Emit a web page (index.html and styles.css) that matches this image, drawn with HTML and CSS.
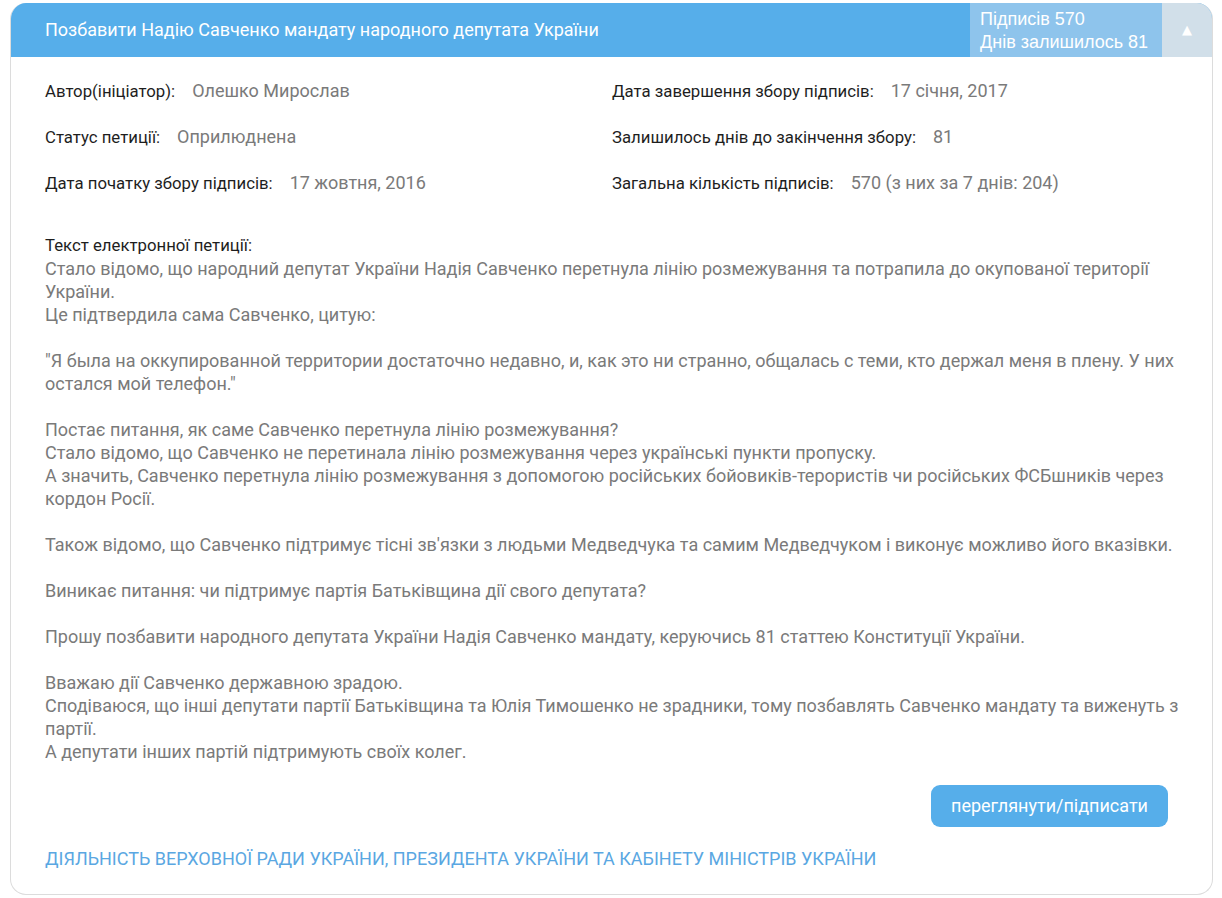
FILE: index.html
```html
<!DOCTYPE html>
<html lang="uk">
<head>
    <meta charset="UTF-8">
    <title>Петиція</title>
    <link rel="stylesheet" href="styles.css">
</head>
<body>
    <div class="petition">
        <div class="petition-head">
            <div class="petition-title">Позбавити Надію Савченко мандату народного депутата України</div>
            <div class="petition-stats">
                <p>Підписів 570</p>
                <p>Днів залишилось 81</p>
            </div>
            <div class="petition-toggle">&#9650;</div>
        </div>

        <div class="petition-body">
            <div class="meta">
                <div class="meta-row"><span class="meta-label">Автор(ініціатор):</span><span class="meta-value">Олешко Мирослав</span></div>
                <div class="meta-row"><span class="meta-label">Дата завершення збору підписів:</span><span class="meta-value">17 січня, 2017</span></div>
                <div class="meta-row"><span class="meta-label">Статус петиції:</span><span class="meta-value">Оприлюднена</span></div>
                <div class="meta-row"><span class="meta-label">Залишилось днів до закінчення збору:</span><span class="meta-value">81</span></div>
                <div class="meta-row"><span class="meta-label">Дата початку збору підписів:</span><span class="meta-value">17 жовтня, 2016</span></div>
                <div class="meta-row"><span class="meta-label">Загальна кількість підписів:</span><span class="meta-value">570 (з них за 7 днів: 204)</span></div>
            </div>

            <div class="petition-text">
                <h3>Текст електронної петиції:</h3>
                <p>Стало відомо, що народний депутат України Надія Савченко перетнула лінію розмежування та потрапила до окупованої території України.<br>
                Це підтвердила сама Савченко, цитую:</p>
                <p>"Я была на оккупированной территории достаточно недавно, и, как это ни странно, общалась с теми, кто держал меня в плену. У них остался мой телефон."</p>
                <p>Постає питання, як саме Савченко перетнула лінію розмежування?<br>
                Стало відомо, що Савченко не перетинала лінію розмежування через українські пункти пропуску.<br>
                А значить, Савченко перетнула лінію розмежування з допомогою російських бойовиків-терористів чи російських ФСБшників через кордон Росії.</p>
                <p>Також відомо, що Савченко підтримує тісні зв'язки з людьми Медведчука та самим Медведчуком і виконує можливо його вказівки.</p>
                <p>Виникає питання: чи підтримує партія Батьківщина дії свого депутата?</p>
                <p>Прошу позбавити народного депутата України Надія Савченко мандату, керуючись 81 статтею Конституції України.</p>
                <p>Вважаю дії Савченко державною зрадою.<br>
                Сподіваюся, що інші депутати партії Батьківщина та Юлія Тимошенко не зрадники, тому позбавлять Савченко мандату та виженуть з партії.<br>
                А депутати інших партій підтримують своїх колег.</p>
            </div>

            <div class="actions">
                <a href="#" class="sign-btn">переглянути/підписати</a>
            </div>

            <a href="#" class="category">Діяльність Верховної Ради України, Президента України та Кабінету Міністрів України</a>
        </div>
    </div>
</body>
</html>
```

FILE: styles.css
```css
* {
    margin: 0;
    padding: 0;
    box-sizing: border-box;
}

body {
    background: #fff;
    font-family: Roboto, 'Noto Sans', sans-serif;
}

.petition {
    margin: 3px 0 0 10px;
    width: 1203px;
    height: 892px;
    border: 1px solid #dcdcdc;
    border-top: none;
    border-radius: 16px;
    overflow: hidden;
}

.petition-head {
    display: flex;
    height: 54px;
    background: #56aeea;
}

.petition-title {
    flex: 1;
    padding-left: 34px;
    line-height: 54px;
    color: #fff;
    font-size: 18px;
}

.petition-stats {
    width: 192px;
    padding: 5px 0 0 10px;
    background: #8ec4ec;
    color: #fff;
    font-family: 'Liberation Sans', Arial, sans-serif;
    font-size: 18px;
    line-height: 23px;
}

.petition-toggle {
    width: 50px;
    background: #d1dfe9;
    color: #fff;
    text-align: center;
    line-height: 54px;
    font-size: 13px;
    font-family: 'DejaVu Sans', sans-serif;
}

.petition-body {
    padding: 22px 33px 0 34px;
}

.meta {
    display: grid;
    grid-template-columns: 567px 1fr;
    row-gap: 23px;
}

.meta-row {
    display: flex;
    align-items: baseline;
    height: 23px;
    line-height: 23px;
}

.meta-label {
    color: #1e1e1e;
    font-size: 16.75px;
    margin-right: 17px;
}

.meta-value {
    color: #7a7a7a;
    font-size: 18px;
}

.petition-text {
    margin-top: 40px;
    color: #7a7a7a;
    font-size: 18px;
    line-height: 23px;
}

.petition-text h3 {
    color: #1e1e1e;
    font-size: 16.75px;
    font-weight: normal;
}

.petition-text p {
    margin-bottom: 23px;
}

.petition-text p:last-child {
    margin-bottom: 0;
}

.actions {
    display: flex;
    justify-content: flex-end;
    margin: 22px 11px 0 0;
}

.sign-btn {
    display: block;
    width: 237px;
    height: 42px;
    line-height: 42px;
    text-align: center;
    background: #56aeea;
    color: #fff;
    border-radius: 9px;
    font-size: 18px;
    text-decoration: none;
}

.category {
    display: block;
    margin-top: 20px;
    color: #5aa7e2;
    font-size: 18px;
    line-height: 23px;
    text-transform: uppercase;
    text-decoration: none;
}
```
